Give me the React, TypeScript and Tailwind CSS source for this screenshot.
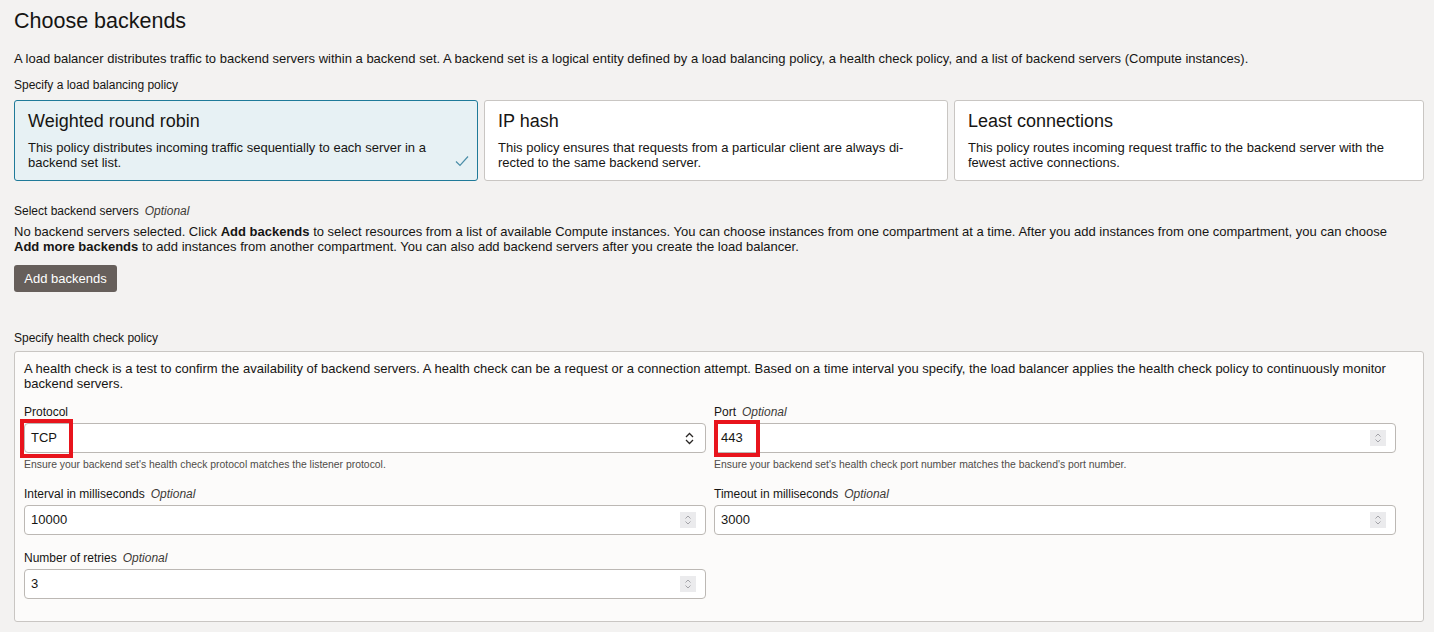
import React from "react";

const policies = [
  {
    title: "Weighted round robin",
    text: "This policy distributes incoming traffic sequentially to each server in a backend set list.",
    selected: true,
  },
  {
    title: "IP hash",
    text: "This policy ensures that requests from a particular client are always di\u00ADrected to the same backend server.",
    selected: false,
  },
  {
    title: "Least connections",
    text: "This policy routes incoming request traffic to the backend server with the fewest active connections.",
    selected: false,
  },
];

function Check() {
  return (
    <svg width="14" height="12" viewBox="0 0 14 12" fill="none">
      <path d="M1 6.5 L5 10.5 L13 1.5" stroke="#4b8ea8" strokeWidth="1.2" />
    </svg>
  );
}

function SelectArrows() {
  return (
    <svg width="9" height="13" viewBox="0 0 9 13" fill="none">
      <path d="M1 5 L4.5 1.5 L8 5" stroke="#2a2725" strokeWidth="1.3" />
      <path d="M1 8 L4.5 11.5 L8 8" stroke="#2a2725" strokeWidth="1.3" />
    </svg>
  );
}

function Spinner() {
  return (
    <div className="flex h-[16px] w-[16px] items-center justify-center bg-[#ebebed]">
      <svg width="8" height="12" viewBox="0 0 8 12" fill="none">
        <path d="M1.5 4.5 L4 2 L6.5 4.5" stroke="#a3a3a8" strokeWidth="1" />
        <path d="M1.5 7.5 L4 10 L6.5 7.5" stroke="#a3a3a8" strokeWidth="1" />
      </svg>
    </div>
  );
}

function Label({ text, optional }: { text: string; optional?: boolean }) {
  return (
    <div className="text-[12px] leading-[15px] text-[#161513]">
      {text}
      {optional && <span className="ml-[6px] italic text-[#3d3a37]">Optional</span>}
    </div>
  );
}

function Field({
  label,
  optional,
  value,
  hint,
  select,
  highlight,
}: {
  label: string;
  optional?: boolean;
  value: string;
  hint?: string;
  select?: boolean;
  highlight?: "tcp" | "port";
}) {
  return (
    <div>
      <Label text={label} optional={optional} />
      <div className="relative mt-[3px] flex h-[30px] items-center justify-between rounded-[4px] border border-[#bcb8b4] bg-white pl-[6px] pr-[9px]">
        <span className="text-[13px] text-[#161513]">{value}</span>
        {select ? (
          <div className="pr-[2px]">
            <SelectArrows />
          </div>
        ) : (
          <Spinner />
        )}
        {highlight === "tcp" && (
          <div className="absolute left-[-5px] top-[-5px] h-[39px] w-[53px] border-[4px] border-[#e8141c]" />
        )}
        {highlight === "port" && (
          <div className="absolute left-[-1px] top-[-4px] h-[37px] w-[46px] border-[4px] border-[#e8141c]" />
        )}
      </div>
      {hint && (
        <div className="mt-[5px] text-[10.4px] leading-[13px] text-[#4f4c49]">{hint}</div>
      )}
    </div>
  );
}

export default function App() {
  return (
    <div
      className="min-h-[632px] bg-[#f3f2f1] pl-[14px] pr-[10px] text-[#161513]"
      style={{ fontFamily: '"Liberation Sans", Arial, sans-serif' }}
    >
      <h1 className="pt-[7px] text-[21.5px] leading-[28px]">Choose backends</h1>
      <p className="mt-[16px] text-[13px] leading-[15px]">
        A load balancer distributes traffic to backend servers within a backend set. A backend set is a logical
        entity defined by a load balancing policy, a health check policy, and a list of backend servers (Compute
        instances).
      </p>
      <div className="mt-[12px] text-[12px] leading-[15px]">Specify a load balancing policy</div>

      <div className="mt-[7px] grid grid-cols-[464px_464px_470px] gap-x-[6px]">
        {policies.map((p) => (
          <div
            key={p.title}
            className={`relative h-[81px] rounded-[3px] border px-[13px] pt-[9px] ${
              p.selected ? "border-[#1f7a99] bg-[#e7f1f4]" : "border-[#c9c6c3] bg-white"
            }`}
          >
            <div className="text-[18px] leading-[22px]">{p.title}</div>
            <div className="mt-[8px] pr-[10px] text-[13px] leading-[15px]">{p.text}</div>
            {p.selected && (
              <div className="absolute bottom-[13px] right-[8px]">
                <Check />
              </div>
            )}
          </div>
        ))}
      </div>

      <div className="mt-[23px]">
        <Label text="Select backend servers" optional />
      </div>
      <p className="mt-[5px] max-w-[1392px] text-[13px] leading-[15px]">
        No backend servers selected. Click <b>Add backends</b> to select resources from a list of available Compute
        instances. You can choose instances from one compartment at a time. After you add instances from one
        compartment, you can choose <b>Add more backends</b> to add instances from another compartment. You can also
        add backend servers after you create the load balancer.
      </p>
      <button className="mt-[11px] h-[27px] w-[103px] rounded-[3px] bg-[#665f5b] text-[13px] text-white">
        Add backends
      </button>

      <div className="mt-[39px] text-[12px] leading-[15px]">Specify health check policy</div>
      <div className="mt-[5px] rounded-[3px] border border-[#c9c6c3] bg-[#fcfbfa] pb-[22px] pl-[9px] pr-[18px] pt-[9px]">
        <p className="text-[13px] leading-[15px]">
          A health check is a test to confirm the availability of backend servers. A health check can be a request or
          a connection attempt. Based on a time interval you specify, the load balancer applies the health check
          policy to continuously monitor backend servers.
        </p>
        <div className="mt-[14px] grid grid-cols-[682px_682px] gap-x-[8px] gap-y-[16px]">
          <Field
            label="Protocol"
            value="TCP"
            select
            highlight="tcp"
            hint="Ensure your backend set's health check protocol matches the listener protocol."
          />
          <Field
            label="Port"
            optional
            value="443"
            highlight="port"
            hint="Ensure your backend set's health check port number matches the backend's port number."
          />
          <Field label="Interval in milliseconds" optional value="10000" />
          <Field label="Timeout in milliseconds" optional value="3000" />
          <Field label="Number of retries" optional value="3" />
        </div>
      </div>
    </div>
  );
}
